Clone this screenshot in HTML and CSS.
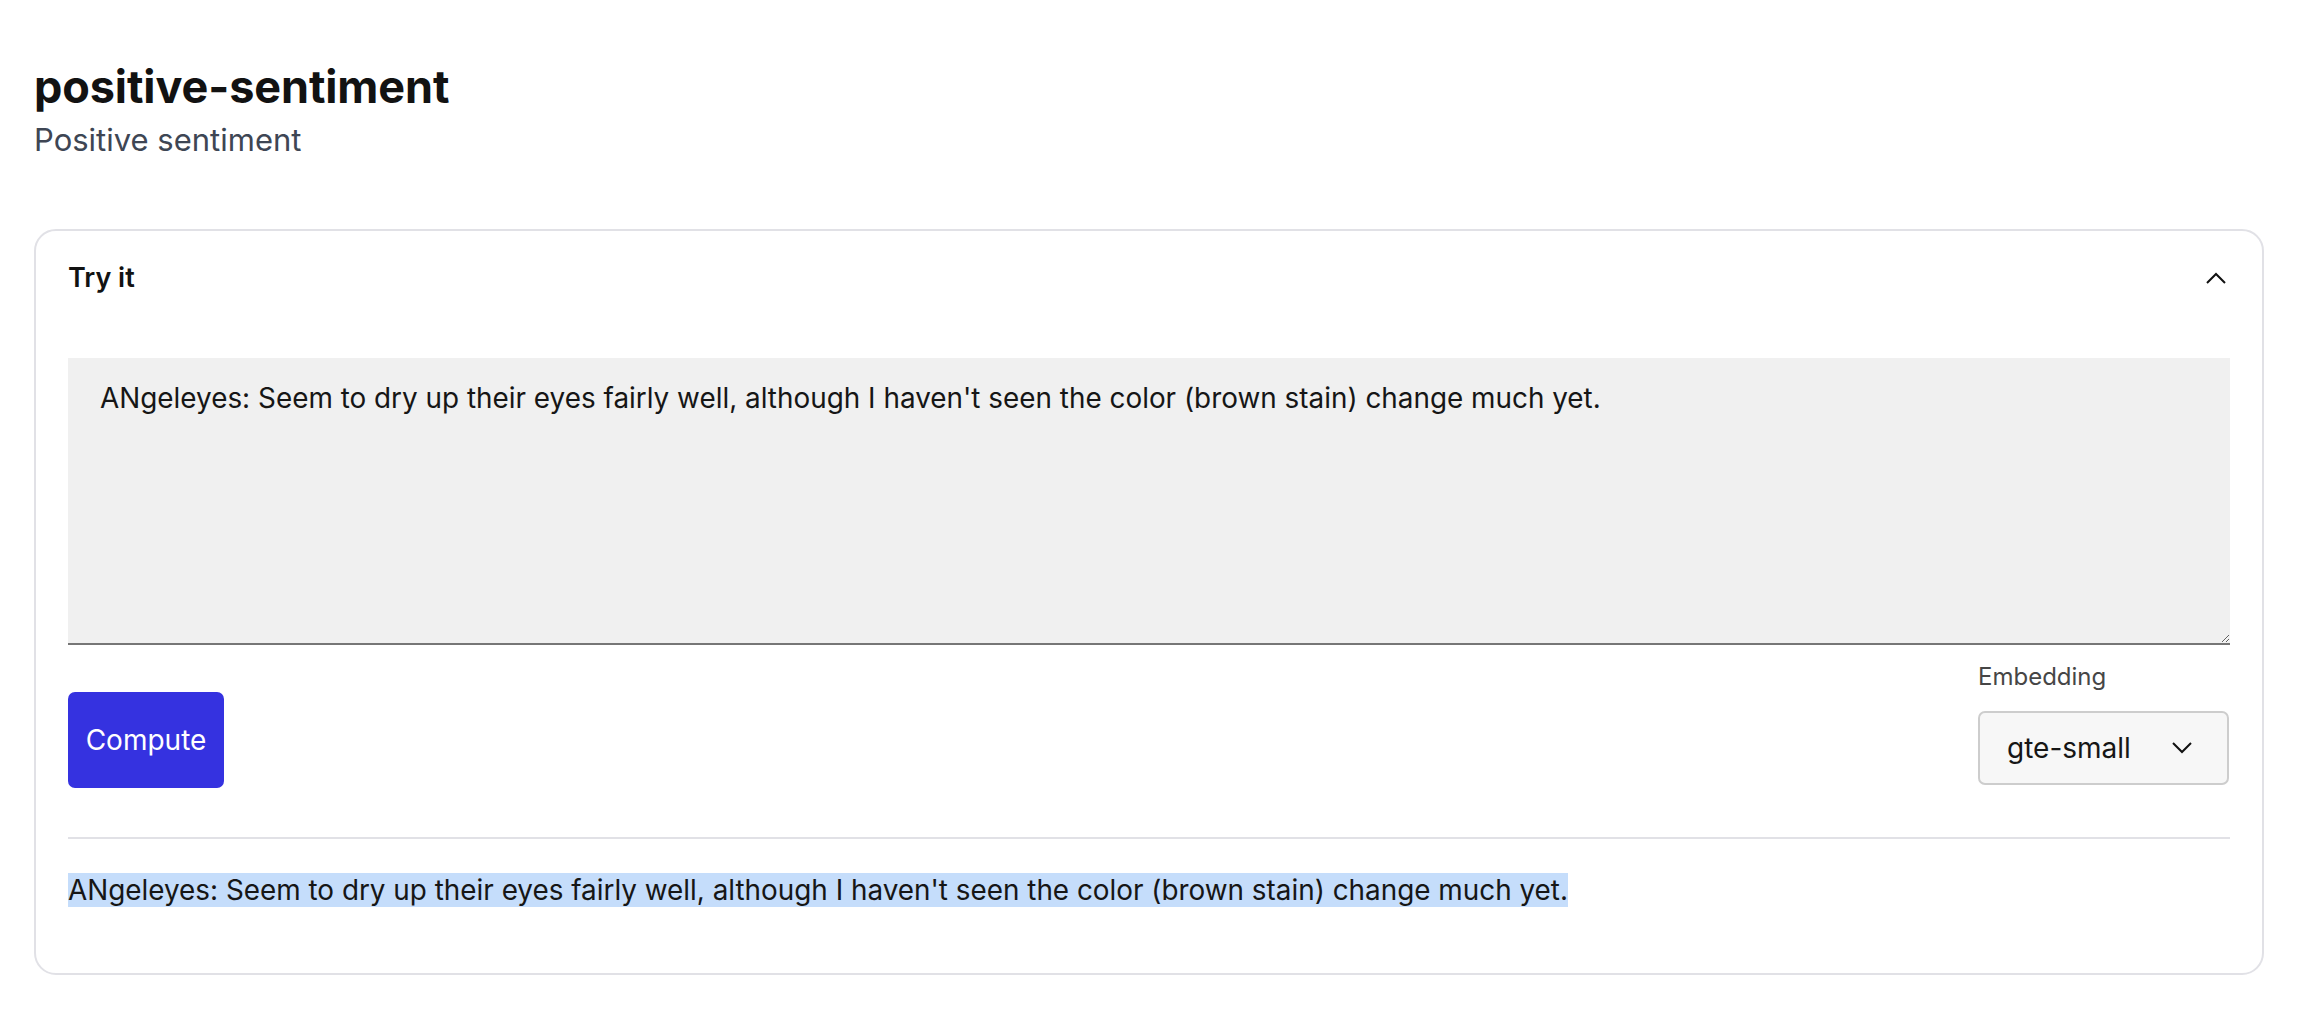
FILE: index.html
```html
<!DOCTYPE html>
<html lang="en">
<head>
<meta charset="utf-8">
<title>positive-sentiment</title>
<link rel="stylesheet" href="styles.css">
</head>
<body>
<main class="page">
  <header class="page-head">
    <h1 class="title">positive-sentiment</h1>
    <p class="subtitle">Positive sentiment</p>
  </header>
  <section class="card">
    <div class="card-head">
      <h2 class="card-title">Try it</h2>
      <svg class="chev" width="20" height="12" viewBox="0 0 20 12"><polyline points="1,11 10,2 19,11" fill="none" stroke="#111" stroke-width="2"/></svg>
    </div>
    <textarea class="input">ANgeleyes: Seem to dry up their eyes fairly well, although I haven't seen the color (brown stain) change much yet.</textarea>
    <div class="controls">
      <button class="compute">Compute</button>
      <div class="field">
        <label class="field-label">Embedding</label>
        <div class="select">
          <span class="select-value">gte-small</span>
          <svg class="chev" width="20" height="12" viewBox="0 0 20 12"><polyline points="1,1 10,10 19,1" fill="none" stroke="#111" stroke-width="2"/></svg>
        </div>
      </div>
    </div>
    <hr class="divider">
    <div class="output"><span class="hl">ANgeleyes: Seem to dry up their eyes fairly well, although I haven't seen the color (brown stain) change much yet.</span></div>
  </section>
</main>
</body>
</html>
```

FILE: styles.css
```css
html, body {
  margin: 0;
  padding: 0;
  background: #ffffff;
}
body {
  font-family: Inter, "Noto Sans", "Liberation Sans", sans-serif;
  color: #161616;
}
.page {
  padding: 60px 54px 0 34px;
}
.page-head {
  display: flex;
  flex-direction: column;
  gap: 8px;
}
.title {
  margin: 0;
  font-size: 45px;
  line-height: 53px;
  font-weight: 700;
  color: #121212;
  letter-spacing: -0.1px;
}
.subtitle {
  margin: 0;
  font-size: 31px;
  line-height: 38px;
  color: #3e4654;
}
.card {
  margin-top: 70px;
  border: 2px solid #e1e1e6;
  border-radius: 22px;
  padding: 0 32px 65px 32px;
}
.card-head {
  display: flex;
  justify-content: space-between;
  align-items: center;
  padding: 31px 4px 0 0;
  height: 32px;
}
.card-title {
  margin: 0;
  font-size: 27px;
  line-height: 32px;
  font-weight: 600;
  color: #121212;
}
.input {
  display: block;
  box-sizing: border-box;
  width: 100%;
  height: 287px;
  margin-top: 64px;
  padding: 22px 32px;
  border: none;
  border-bottom: 2px solid #767676;
  border-radius: 0;
  background: #f0f0f0;
  font-family: inherit;
  font-size: 27.88px;
  line-height: 36px;
  color: #161616;
  resize: both;
}
.controls {
  display: flex;
  justify-content: space-between;
  align-items: flex-end;
  margin-top: 18px;
}
.compute {
  width: 156px;
  height: 96px;
  border: none;
  border-radius: 7px;
  background: #3532e0;
  color: #ffffff;
  font-family: inherit;
  font-size: 28px;
  padding: 0;
}
.field {
  display: flex;
  flex-direction: column;
  gap: 20px;
  margin-bottom: 3px;
  margin-right: 1px;
}
.field-label {
  font-size: 24px;
  line-height: 28px;
  color: #464646;
}
.select {
  box-sizing: border-box;
  width: 251px;
  height: 74px;
  display: flex;
  align-items: center;
  justify-content: space-between;
  padding: 0 35px 0 27px;
  background: #f7f7f7;
  border: 2px solid #cdcdcd;
  border-radius: 7px;
}
.select-value {
  font-size: 28px;
  color: #161616;
}
.divider {
  margin: 49px 0 0 0;
  border: none;
  border-top: 2px solid #e1e1e6;
}
.output {
  margin-top: 33px;
  font-size: 27.86px;
  line-height: 36px;
}
.hl {
  background: #c5ddfb;
  color: #161616;
}
```
